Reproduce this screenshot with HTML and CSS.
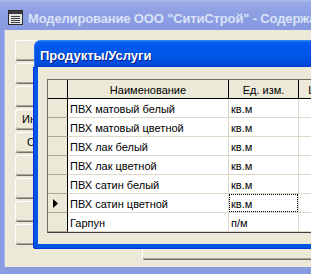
FILE: index.html
```html
<!DOCTYPE html>
<html lang="ru">
<head>
<meta charset="utf-8">
<title>Продукты/Услуги</title>
<link rel="stylesheet" href="styles.css">
</head>
<body>
<div class="win">
  <div class="win-title">
    <svg class="win-icon" width="15" height="15" viewBox="0 0 15 15">
      <rect x="0.5" y="0.5" width="14" height="14" fill="#E4E4E4" stroke="#2B2B2B"/>
      <rect x="1" y="1" width="13" height="3" fill="#3A3A3A"/>
      <path d="M3 6.5h9M3 8.5h9M3 10.5h9M3 12.5h9" stroke="#404040"/>
    </svg>
    <span class="win-caption">Моделирование ООО "СитиСтрой" - Содержание</span>
  </div>
  <div class="win-body">
    <div class="btn-col">
      <div class="fbtn"></div>
      <div class="fbtn"></div>
      <div class="fbtn"></div>
      <div class="fbtn fbtn-info">Информация</div>
      <div class="fbtn fbtn-rep">Отчёты</div>
      <div class="fbtn"></div>
      <div class="fbtn"></div>
      <div class="fbtn"></div>
      <div class="fbtn"></div>
    </div>
    <div class="fbtn fbtn-under"></div>

    <div class="dlg">
      <div class="dlg-title">Продукты/Услуги</div>
      <div class="dlg-body">
        <div class="grid">
          <div class="row row-head">
            <div class="cell c-sel"></div>
            <div class="cell c-name">Наименование</div>
            <div class="cell c-unit">Ед. изм.</div>
            <div class="cell c-price">Цена</div>
          </div>
          <div class="row">
            <div class="cell c-sel"></div>
            <div class="cell c-name">ПВХ матовый белый</div>
            <div class="cell c-unit">кв.м</div>
            <div class="cell c-price"></div>
          </div>
          <div class="row">
            <div class="cell c-sel"></div>
            <div class="cell c-name">ПВХ матовый цветной</div>
            <div class="cell c-unit">кв.м</div>
            <div class="cell c-price"></div>
          </div>
          <div class="row">
            <div class="cell c-sel"></div>
            <div class="cell c-name">ПВХ лак белый</div>
            <div class="cell c-unit">кв.м</div>
            <div class="cell c-price"></div>
          </div>
          <div class="row">
            <div class="cell c-sel"></div>
            <div class="cell c-name">ПВХ лак цветной</div>
            <div class="cell c-unit">кв.м</div>
            <div class="cell c-price"></div>
          </div>
          <div class="row">
            <div class="cell c-sel"></div>
            <div class="cell c-name">ПВХ сатин белый</div>
            <div class="cell c-unit">кв.м</div>
            <div class="cell c-price"></div>
          </div>
          <div class="row">
            <div class="cell c-sel">
              <svg class="cur-mark" width="5" height="9" viewBox="0 0 5 9"><path d="M0 0L5 4.5L0 9Z" fill="#000"/></svg>
            </div>
            <div class="cell c-name">ПВХ сатин цветной</div>
            <div class="cell c-unit c-focus">кв.м</div>
            <div class="cell c-price"></div>
          </div>
          <div class="row">
            <div class="cell c-sel"></div>
            <div class="cell c-name">Гарпун</div>
            <div class="cell c-unit">п/м</div>
            <div class="cell c-price"></div>
          </div>
        </div>
      </div>
    </div>
  </div>
</div>
</body>
</html>
```
FILE: styles.css
```css
html, body {
  margin: 0;
  padding: 0;
}
body {
  width: 311px;
  height: 274px;
  overflow: hidden;
  font-family: "Liberation Sans", Arial, sans-serif;
  background: #8A9CE1;
}
.win {
  width: 311px;
  height: 274px;
  display: flex;
  flex-direction: column;
  background: #8A9CE1;
}
.win-title {
  height: 30px;
  flex: none;
  display: flex;
  align-items: flex-start;
  background: linear-gradient(#AEBDEE 0, #98AAE7 3px, #8EA0E3 40%, #8799E0 100%);
  color: #D9E2F8;
  font: bold 13px/15px "Liberation Sans", Arial, sans-serif;
  white-space: nowrap;
  overflow: hidden;
}
.win-icon {
  flex: none;
  margin: 10px 0 0 8px;
}
.win-caption {
  margin-left: 5px;
  padding-top: 11px;
  letter-spacing: -0.15px;
}
.win-body {
  flex: 1;
  position: relative;
  overflow: hidden;
  background: #ECE9D8;
  border-left: 4px solid #8A9CE1;
  border-bottom: 7px solid #8A9CE1;
  box-shadow: inset 1px 0 0 #A9B6EA;
}
.btn-col {
  display: flex;
  flex-direction: column;
  gap: 2px;
  padding: 10px 0 0 11px;
}
.fbtn {
  width: 100px;
  height: 21px;
  box-sizing: border-box;
  background: #ECE9D8;
  border-top: 1px solid #FFFFFF;
  border-left: 1px solid #FFFFFF;
  border-bottom: 1px solid #716F64;
  box-shadow: inset 0 -1px 0 #ACA899;
  border-radius: 3px 0 0 3px;
  font-size: 11px;
  line-height: 19px;
  color: #000;
  white-space: nowrap;
}
.fbtn-info {
  padding-left: 6px;
}
.fbtn-rep {
  padding-left: 11px;
}
.fbtn-under {
  position: absolute;
  left: 138px;
  top: 200px;
  width: 300px;
  height: 30px;
}
.dlg {
  position: absolute;
  left: 30px;
  top: 10px;
  width: 420px;
  height: 208px;
  display: flex;
  flex-direction: column;
}
.dlg-title {
  height: 27px;
  flex: none;
  box-sizing: border-box;
  padding: 8px 0 0 6px;
  border-top-left-radius: 7px;
  background: linear-gradient(#3D8DFA 0, #0B63F1 2px, #0058EE 6px, #0055E7 60%, #004BDC 88%, #003FCB 100%);
  box-shadow: inset 1px 0 0 #2A6FF0;
  color: #FFFFFF;
  font: bold 13px/15px "Liberation Sans", Arial, sans-serif;
  text-shadow: 1px 1px 0 #0A1E8C;
  white-space: nowrap;
}
.dlg-body {
  flex: 1;
  background: #ECE9D8;
  border-left: 4px solid #0055E5;
  border-bottom: 4px solid #0055E5;
  box-shadow: -1px 0 0 #0831D9, 0 1px 0 #0831D9;
  padding: 12px 0 0 9px;
}
.grid {
  display: inline-flex;
  flex-direction: column;
  border-top: 1px solid #716F64;
  border-left: 1px solid #716F64;
  border-bottom: 1px solid #404040;
}
.row {
  display: flex;
}
.cell {
  box-sizing: border-box;
  height: 19px;
  padding: 0 2px;
  line-height: 20px;
  font-size: 11px;
  color: #000;
  white-space: nowrap;
  overflow: hidden;
  background: #FFFFFF;
  border-right: 1px solid #DCD9C9;
  border-bottom: 1px solid #DCD9C9;
}
.c-sel {
  width: 20px;
  background: #ECE9D8;
  border-right-color: #000;
  border-bottom-color: #ACA899;
  padding: 0 0 0 5px;
}
.c-name {
  width: 161px;
}
.c-unit {
  width: 70px;
}
.c-price {
  width: 46px;
}
.row-head .cell {
  background: #ECE9D8;
  border-right-color: #000;
  border-bottom-color: #000;
  text-align: center;
}
.cur-mark {
  display: block;
  margin-top: 5px;
}
.c-focus {
  position: relative;
}
.c-focus::after {
  content: "";
  position: absolute;
  left: 0;
  top: 0;
  right: 0;
  bottom: 0;
  border: 1px dotted #000;
}
```
